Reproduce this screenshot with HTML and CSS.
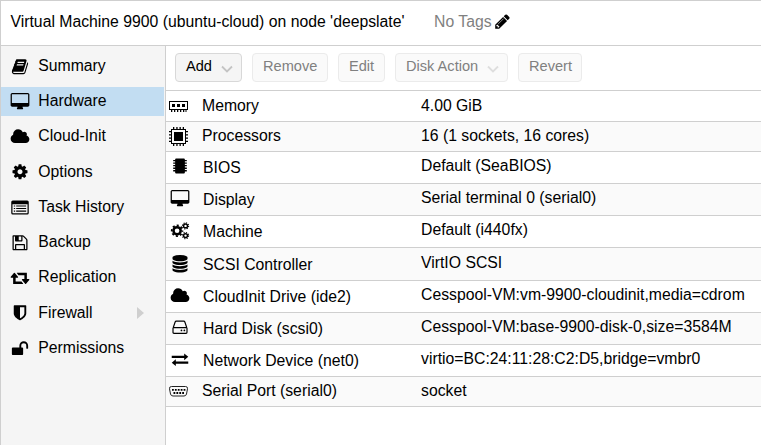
FILE: index.html
```html
<!DOCTYPE html>
<html lang="en">
<head>
<meta charset="utf-8">
<title>Virtual Machine 9900</title>
<link rel="stylesheet" href="styles.css">
</head>
<body>
<svg class="defs" width="0" height="0">
<symbol id="desktop" viewBox="0 0 1920 1792"><path d="M1792 992v-832q0-13-9.500-22.500t-22.500-9.500h-1600q-13 0-22.500 9.500t-9.500 22.500v832q0 13 9.500 22.500t22.500 9.500h1600q13 0 22.500-9.500t9.500-22.500zm128-832v1088q0 66-47 113t-113 47h-544q0 37 16 77.500t32 71 16 43.500q0 26-19 45t-45 19h-512q-26 0-45-19t-19-45q0-14 16-44t32-70 16-78h-544q-66 0-113-47t-47-113v-1088q0-66 47-113t113-47h1600q66 0 113 47t47 113z"/></symbol>
<symbol id="cloud" viewBox="0 0 1920 1792"><path d="M1920 1152q0 159-112.500 271.500t-271.500 112.500h-1088q-185 0-316.500-131.500t-131.500-316.500q0-132 71-241.500t187-163.500q-2-28-2-43 0-212 150-362t362-150q158 0 286.500 88t187.500 230q70-62 166-62 106 0 181 75t75 181q0 75-41 138 129 30 213 134.500t84 239.500z"/></symbol>
</svg>
<div class="window">
  <header class="title">
    <span>Virtual Machine 9900 (ubuntu-cloud) on node 'deepslate'</span>
    <span class="tags">No Tags</span>
    <svg class="pencil" viewBox="0 0 1792 1792"><path d="M491 1536l91-91-235-235-91 91v107h128v128h107zm523-928q0-22-22-22-10 0-17 7l-542 542q-7 7-7 17 0 22 22 22 10 0 17-7l542-542q7-7 7-17zm-54-192l416 416-832 832h-416v-416zm683 96q0 53-37 90l-166 166-416-416 166-165q36-38 90-38 53 0 91 38l235 234q37 39 37 91z"/></svg>
  </header>
  <div class="body">
    <nav class="side">
      <div class="item"><svg class="ico" viewBox="0 0 1792 1792"><path d="M1703 478q40 57 18 129l-275 906q-19 64-76.500 107.500t-122.500 43.500h-923q-77 0-148.500-53.500t-99.500-131.500q-24-67-2-127 0-4 3-27t4-37q1-8-3-21.500t-3-19.500q2-11 8-21t16.500-23.500 16.500-23.500q23-38 45-91.500t30-91.500q3-10 .5-30t-.5-28q3-11 17-28t17-23q21-36 42-92t25-90q1-9-2.500-32t.5-28q4-13 22-30.500t22-22.500q19-26 42.500-84.500t27.500-96.500q1-8-3-25.500t-2-26.500q2-8 9-18t18-23 17-21q8-12 16.500-30.500t15-35 16-36 19.500-32 26.500-23.500 36-11.500 47.500 5.500l-1 3q38-9 51-9h761q74 0 114 56t18 130l-274 906q-36 119-71.500 153.500t-128.500 34.500h-869q-27 0-38 15-11 16-1 43 24 70 144 70h923q29 0 56-15.500t35-41.500l300-987q7-22 5-57 38 15 59 43zm-1064 2q-4 13 2 22.500t20 9.500h608q13 0 25.500-9.500t16.500-22.500l21-64q4-13-2-22.500t-20-9.500h-608q-13 0-25.500 9.500t-16.500 22.500zm-83 256q-4 13 2 22.500t20 9.500h608q13 0 25.500-9.500t16.500-22.500l21-64q4-13-2-22.500t-20-9.500h-608q-13 0-25.500 9.500t-16.500 22.500z"/></svg><span>Summary</span></div>
      <div class="item active"><svg class="ico"><use href="#desktop"/></svg><span>Hardware</span></div>
      <div class="item"><svg class="ico"><use href="#cloud"/></svg><span>Cloud-Init</span></div>
      <div class="item"><svg class="ico" viewBox="0 0 1792 1792"><path d="M1152 896q0-106-75-181t-181-75-181 75-75 181 75 181 181 75 181-75 75-181zm512-109v222q0 12-8 23t-20 13l-185 28q-19 54-39 91 35 50 107 138 10 12 10 25t-9 23q-27 37-99 108t-94 71q-12 0-26-9l-138-108q-44 23-91 38-16 136-29 186-7 28-36 28h-222q-14 0-24.500-8.500t-11.500-21.500l-28-184q-49-16-90-37l-141 107q-10 9-25 9-14 0-25-11-126-114-165-168-7-10-7-23 0-12 8-23 15-21 51-66.500t54-70.500q-27-50-41-99l-183-27q-13-2-21-12.500t-8-23.500v-222q0-12 8-23t19-13l186-28q14-46 39-92-40-57-107-138-10-12-10-24 0-10 9-23 26-36 98.500-107.500t94.500-71.500q13 0 26 10l138 107q44-23 91-38 16-136 29-186 7-28 36-28h222q14 0 24.500 8.500t11.500 21.500l28 184q49 16 90 37l142-107q9-9 24-9 13 0 25 10 129 119 165 170 7 8 7 22 0 12-8 23-15 21-51 66.500t-54 70.500q26 50 41 98l183 28q13 2 21 12.500t8 23.500z"/></svg><span>Options</span></div>
      <div class="item"><svg class="ico" viewBox="0 0 18 17"><path fill-rule="evenodd" d="M2 1.500h14q1.500 0 1.500 1.500v10.500q0 1.500-1.500 1.500H2Q.5 15 .5 13.500V3Q.5 1.500 2 1.500zM1.700 5v8.300q0 .5.500.5h13.600q.5 0 .5-.5V5zM3 6.200h1.300v1.100H3zM5.300 6.200H15v1.100H5.300zM3 8.700h1.300v1.100H3zM5.300 8.700H15v1.100H5.300zM3 11.200h1.300v1.100H3zM5.300 11.200H15v1.100H5.300z"/></svg><span>Task History</span></div>
      <div class="item"><svg class="ico" viewBox="0 0 1792 1792"><path d="M512 1536h768v-384h-768v384zm896 0h128v-896q0-14-10-38.500t-20-34.500l-281-281q-10-10-34-20t-39-10v416q0 40-28 68t-68 28h-576q-40 0-68-28t-28-68v-416h-128v1280h128v-416q0-40 28-68t68-28h832q40 0 68 28t28 68v416zm-384-928v-320q0-13-9.500-22.500t-22.500-9.500h-192q-13 0-22.500 9.500t-9.500 22.500v320q0 13 9.500 22.500t22.500 9.500h192q13 0 22.500-9.500t9.500-22.500zm640 32v928q0 40-28 68t-68 28h-1344q-40 0-68-28t-28-68v-1344q0-40 28-68t68-28h928q40 0 88 20t76 48l280 280q28 28 48 76t20 88z"/></svg><span>Backup</span></div>
      <div class="item"><svg class="ico" viewBox="0 0 1920 1792"><path d="M1280 1504q0 13-9.500 22.500t-22.500 9.500h-960q-8 0-13.500-2t-9-7-5.500-8-3-11.500-1-11.500v-600h-192q-26 0-45-19t-19-45q0-24 15-41l320-384q19-22 49-22t49 22l320 384q15 17 15 41 0 26-19 45t-45 19h-192v384h576q16 0 25 11l160 192q7 11 7 21zm640-416q0 24-15 41l-320 384q-20 23-49 23t-49-23l-320-384q-15-17-15-41 0-26 19-45t45-19h192v-384h-576q-16 0-25-12l-160-192q-7-9-7-20 0-13 9.500-22.500t22.500-9.500h960q8 0 13.500 2t9 7 5.500 8 3 11.500 1 11.500v600h192q26 0 45 19t19 45z"/></svg><span>Replication</span></div>
      <div class="item"><svg class="ico" viewBox="0 0 1792 1792"><path d="M1344 960v-640h-448v1137q119-63 213-137 235-184 235-360zm192-768v768q0 86-33.500 170.500t-83 150-118 127.500-126.500 103-121 77.500-89.500 49.500-42.500 20q-12 6-26 6t-26-6q-16-7-42.500-20t-89.500-49.500-121-77.500-126.500-103-118-127.500-83-150-33.500-170.500v-768q0-26 19-45t45-19h1152q26 0 45 19t19 45z"/></svg><span>Firewall</span><i class="expand"></i></div>
      <div class="item"><svg class="ico" viewBox="0 0 1792 1792"><path d="M1728 576v256q0 26-19 45t-45 19h-64q-26 0-45-19t-19-45v-256q0-106-75-181t-181-75-181 75-75 181v192h96q40 0 68 28t28 68v576q0 40-28 68t-68 28h-960q-40 0-68-28t-28-68v-576q0-40 28-68t68-28h672v-192q0-185 131.500-316.500t316.500-131.500 316.500 131.500 131.500 316.500z"/></svg><span>Permissions</span></div>
    </nav>
    <main class="main">
      <div class="toolbar">
        <div class="btn add"><span>Add</span><svg class="chev" viewBox="0 0 12 8"><path d="M1 1.500l5 5 5-5"/></svg></div>
        <div class="btn off remove">Remove</div>
        <div class="btn off edit">Edit</div>
        <div class="btn off disk"><span>Disk Action</span><svg class="chev" viewBox="0 0 12 8"><path d="M1 1.500l5 5 5-5"/></svg></div>
        <div class="btn off revert">Revert</div>
      </div>
      <div class="grid">
        <div class="row first"><svg class="dev" viewBox="0 0 20 20"><path fill-rule="evenodd" d="M0 4h19v9H0zM1 5v7h17V5zM3 7h3v3H3zM8 7h3v3H8zM13 7h3v3h-3zM2 13h1.300v2H2zM5 13h1.300v2H5zM8 13h1.300v2H8zM11 13h1.300v2H11zM14 13h1.300v2H14zM16.500 13h1v2h-1z"/></svg><span class="name">Memory</span><span>4.00 GiB</span></div>
        <div class="row short"><svg class="dev" viewBox="0 0 20 20"><path fill-rule="evenodd" d="M2 2h15v15H2zM3 3v13h13V3zM5 5h9v9H5zM4 0h1.300v2H4zM7.300 0h1.300v2H7.300zM10.500 0h1.300v2h-1.300zM13.700 0H15v2h-1.300zM4 17h1.300v2H4zM7.300 17h1.300v2H7.300zM10.500 17h1.300v2h-1.300zM13.700 17H15v2h-1.300zM0 4h2v1.300H0zM0 7.300h2v1.300H0zM0 10.500h2v1.300H0zM0 13.700h2V15H0zM17 4h2v1.300h-2zM17 7.300h2v1.300h-2zM17 10.500h2v1.300h-2zM17 13.700h2V15h-2z"/></svg><span class="name">Processors</span><span>16 (1 sockets, 16 cores)</span></div>
        <div class="row"><svg class="ico" viewBox="0 0 18 18"><path d="M4 1.500q0-1 1-1h8q1 0 1 1V15q0 1-1 1H5q-1 0-1-1zM2 2h2v1.400H2zM2 4.600h2V6H2zM2 7.200h2v1.400H2zM2 9.800h2v1.400H2zM2 12.400h2v1.400H2zM14 2h2v1.400h-2zM14 4.600h2V6h-2zM14 7.200h2v1.400h-2zM14 9.800h2v1.400h-2zM14 12.400h2v1.400h-2z"/></svg><span class="name">BIOS</span><span>Default (SeaBIOS)</span></div>
        <div class="row"><svg class="ico"><use href="#desktop"/></svg><span class="name">Display</span><span>Serial terminal 0 (serial0)</span></div>
        <div class="row"><svg class="ico" viewBox="0 0 19 18"><g fill="none" stroke="#000"><circle cx="6.500" cy="9" r="3.700" stroke-width="2.600"/><circle cx="6.500" cy="9" r="5.500" stroke-width="1.800" stroke-dasharray="2.160 2.160" stroke-dashoffset="1.080"/><circle cx="15.200" cy="4" r="2" stroke-width="1.500"/><circle cx="15.200" cy="4" r="3.200" stroke-width="1.100" stroke-dasharray="1.250 1.260"/><circle cx="15.200" cy="14" r="2" stroke-width="1.500"/><circle cx="15.200" cy="14" r="3.200" stroke-width="1.100" stroke-dasharray="1.250 1.260"/></g></svg><span class="name">Machine</span><span>Default (i440fx)</span></div>
        <div class="row tall"><svg class="ico" viewBox="0 0 1792 1792"><path d="M896 768q237 0 443-43t325-127v170q0 69-103 128t-280 93.500-385 34.500-385-34.500-280-93.500-103-128v-170q119 84 325 127t443 43zm0 768q237 0 443-43t325-127v170q0 69-103 128t-280 93.500-385 34.500-385-34.500-280-93.500-103-128v-170q119 84 325 127t443 43zm0-384q237 0 443-43t325-127v170q0 69-103 128t-280 93.500-385 34.500-385-34.500-280-93.500-103-128v-170q119 84 325 127t443 43zm0-1152q208 0 385 34.500t280 93.500 103 128v128q0 69-103 128t-280 93.500-385 34.500-385-34.500-280-93.500-103-128v-128q0-69 103-128t280-93.500 385-34.500z"/></svg><span class="name">SCSI Controller</span><span>VirtIO SCSI</span></div>
        <div class="row"><svg class="ico"><use href="#cloud"/></svg><span class="name">CloudInit Drive (ide2)</span><span>Cesspool-VM:vm-9900-cloudinit,media=cdrom</span></div>
        <div class="row"><svg class="ico" viewBox="0 0 18 18"><g fill="none" stroke="#000" stroke-width="1.200"><path d="M2.500 8.800h13q.7 0 .7.700v4.200q0 1-1 1H2.800q-1 0-1-1V9.500q0-.7.700-.7zM2 9l2-5.900q.3-.9 1.200-.9h7.600q.9 0 1.200.9L16 9"/></g><circle cx="10.500" cy="11.800" r=".9"/><circle cx="13.500" cy="11.800" r=".9"/></svg><span class="name">Hard Disk (scsi0)</span><span>Cesspool-VM:base-9900-disk-0,size=3584M</span></div>
        <div class="row"><svg class="ico" viewBox="0 0 18 18"><path d="M.5 4.900h12.800V2.500L17.500 6l-4.200 3.500V7.100H.5zM17.500 10.900H4.700V8.500L.5 12l4.200 3.500v-2.400h12.800z"/></svg><span class="name">Network Device (net0)</span><span>virtio=BC:24:11:28:C2:D5,bridge=vmbr0</span></div>
        <div class="row short"><svg class="dev" viewBox="0 0 20 20"><path d="M2.500 4.500h14q2.300 0 2 2.300l-1 5.200q-.5 2-2.500 2H4q-2 0-2.500-2L.5 6.800q-.3-2.300 2-2.300z" fill="none" stroke="#222"/><g fill="none" stroke="#000" stroke-width="1.800"><path d="M3 7.900h13.500" stroke-dasharray="1.800 1.100"/><path d="M4.500 11h10.600" stroke-dasharray="1.800 1.100"/></g></svg><span class="name">Serial Port (serial0)</span><span>socket</span></div>
      </div>
    </main>
  </div>
</div>
</body>
</html>
```
FILE: styles.css
```css
* { box-sizing: border-box; }
body {
  margin: 0;
  background: #fff;
  color: #000;
  font: 15.78px/18px "Liberation Sans", Arial, sans-serif;
  white-space: nowrap;
  overflow: hidden;
}
.defs { display: block; }
.window {
  height: 445px;
  border-top: 1px solid #cfcfcf;
  border-left: 1px solid #cfcfcf;
  display: flex;
  flex-direction: column;
}
.title {
  height: 45px;
  flex: none;
  border-bottom: 1px solid #cfcfcf;
  display: flex;
  align-items: center;
  padding: 0 0 3px 9.500px;
}
.tags { color: #808080; margin-left: 29.500px; }
.pencil { width: 17px; height: 17px; margin-left: 2px; }
.body { flex: 1; display: flex; min-height: 0; }
.side {
  width: 165px;
  flex: none;
  background: #f5f5f5;
  border-right: 1px solid #cfcfcf;
  padding: 6px 1px 0 0;
  display: flex;
  flex-direction: column;
  gap: 6.240px;
}
.item { height: 29px; display: flex; align-items: center; padding-left: 8px; }
.item.active { background: #c2ddf2; }
.item span { margin-left: 7.300px; position: relative; top: -.5px; }
.ico { width: 22px; height: 17.500px; flex: none; }
.expand {
  margin: 0 20px 0 auto;
  border-left: 7px solid #cfcfcf;
  border-top: 6px solid transparent;
  border-bottom: 6px solid transparent;
}
.main { flex: 1; min-width: 0; }
.toolbar { height: 45px; border-bottom: 1px solid #cfcfcf; padding: 7px 9px 0; display: flex; gap: 10px; }
.btn {
  height: 29px;
  border: 1px solid #d8d8d8;
  border-radius: 4px;
  background: #f5f5f5;
  font-size: 14.600px;
  display: flex;
  align-items: center;
  padding: 0 0 4px 10px;
}
.btn.off { border-color: #ebebeb; background: #fafafa; color: #808080; }
.add { width: 67px; }
.remove { width: 76px; }
.edit { width: 47px; }
.disk { width: 113px; }
.revert { width: 64px; }
.chev { width: 12px; height: 8px; margin: 6px 8px 0 auto; fill: none; stroke: #c4c4c4; stroke-width: 1.800; }
.off .chev { stroke: #dedede; }
.row {
  height: 32px;
  border-bottom: 1px solid #cfcfcf;
  display: grid;
  grid-template-columns: 37px 218px 1fr;
  padding-top: 5px;
  align-items: start;
}
.row:nth-child(even) { background: #fafafa; }
.row .name { padding-top: 2px; }
.row .ico { margin: 1px 0 0 3px; }
.row .dev { width: 20px; height: 20px; margin-left: 3px; }
.row.first { height: 31px; padding-top: 6px; }
.row.short { height: 30px; }
.row.first .name, .row.short .name { padding: 0; margin-left: -1px; }
.row.tall { height: 33px; padding-top: 6px; }
```
